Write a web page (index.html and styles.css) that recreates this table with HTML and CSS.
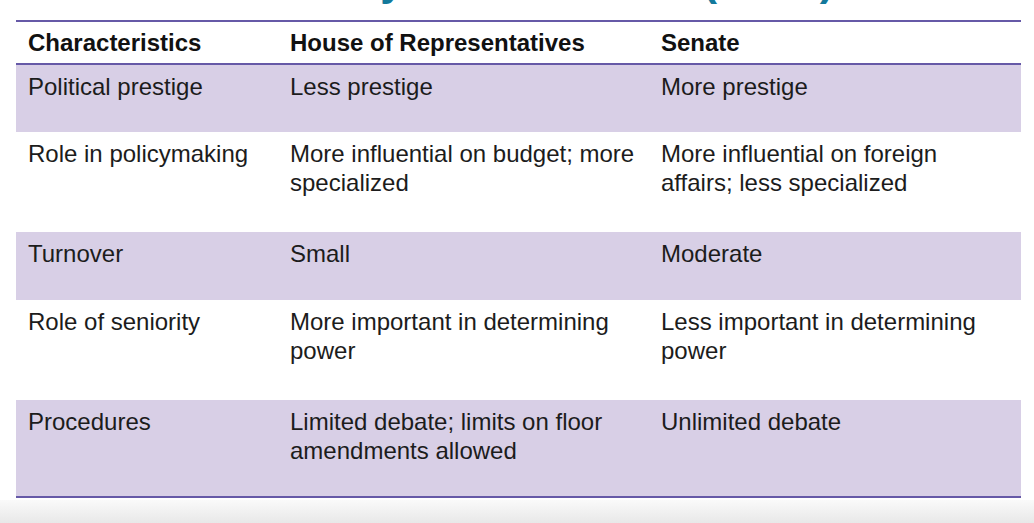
FILE: index.html
```html
<!DOCTYPE html>
<html lang="en">
<head>
<meta charset="utf-8">
<title>House vs Senate</title>
<link rel="stylesheet" href="styles.css">
</head>
<body>
<div class="page">
  <div class="title-strip">
    <h1 class="title">Senate: Key Characteristics (cont.)</h1>
  </div>
  <table class="compare">
    <colgroup>
      <col class="c1">
      <col class="c2">
      <col class="c3">
    </colgroup>
    <thead>
      <tr>
        <th>Characteristics</th>
        <th>House of Representatives</th>
        <th>Senate</th>
      </tr>
    </thead>
    <tbody>
      <tr class="band short">
        <td>Political prestige</td>
        <td>Less prestige</td>
        <td>More prestige</td>
      </tr>
      <tr class="tall">
        <td>Role in policymaking</td>
        <td>More influential on budget; more specialized</td>
        <td>More influential on foreign affairs; less specialized</td>
      </tr>
      <tr class="band short">
        <td>Turnover</td>
        <td>Small</td>
        <td>Moderate</td>
      </tr>
      <tr class="tall">
        <td>Role of seniority</td>
        <td>More important in determining power</td>
        <td>Less important in determining power</td>
      </tr>
      <tr class="band last">
        <td>Procedures</td>
        <td>Limited debate; limits on floor amendments allowed</td>
        <td>Unlimited debate</td>
      </tr>
    </tbody>
  </table>
  <div class="player-fade"></div>
</div>
</body>
</html>
```

FILE: styles.css
```css
html, body {
  margin: 0;
  padding: 0;
  background: #ffffff;
}

body {
  font-family: "Liberation Sans", Arial, sans-serif;
  color: #1c1c1c;
  overflow: hidden;
}

.page {
  width: 1034px;
  height: 523px;
  display: flex;
  flex-direction: column;
}

.title-strip {
  height: 20px;
  overflow: hidden;
  flex: none;
}

.title {
  margin: -41px 0 0 0;
  padding-left: 176px;
  font-size: 43px;
  line-height: 42px;
  font-weight: bold;
  word-spacing: -18px;
  color: #13799b;
  white-space: nowrap;
}

.compare {
  flex: none;
  margin: 0 13px 0 16px;
  width: 1005px;
  border-collapse: collapse;
  table-layout: fixed;
  font-size: 24px;
  line-height: 29px;
  border-top: 2px solid #6659a7;
  border-bottom: 2px solid #6659a7;
}

.compare th,
.compare td {
  box-sizing: border-box;
  text-align: left;
  vertical-align: top;
  padding: 7px 8px 0 12px;
}

.compare th {
  font-weight: bold;
  padding: 6px 8px 6px 12px;
  color: #111111;
}

.compare thead tr {
  border-bottom: 2px solid #6659a7;
}

.c1 { width: 262px; }
.c2 { width: 371px; }
.c3 { width: 372px; }

.band {
  background: #d8cfe6;
}

.short { height: 68px; }
.tall { height: 100px; }
.last { height: 97px; }

.player-fade {
  flex: 1;
  margin-top: 2px;
  background: linear-gradient(#fafafa, #e8e8e8);
}
```
